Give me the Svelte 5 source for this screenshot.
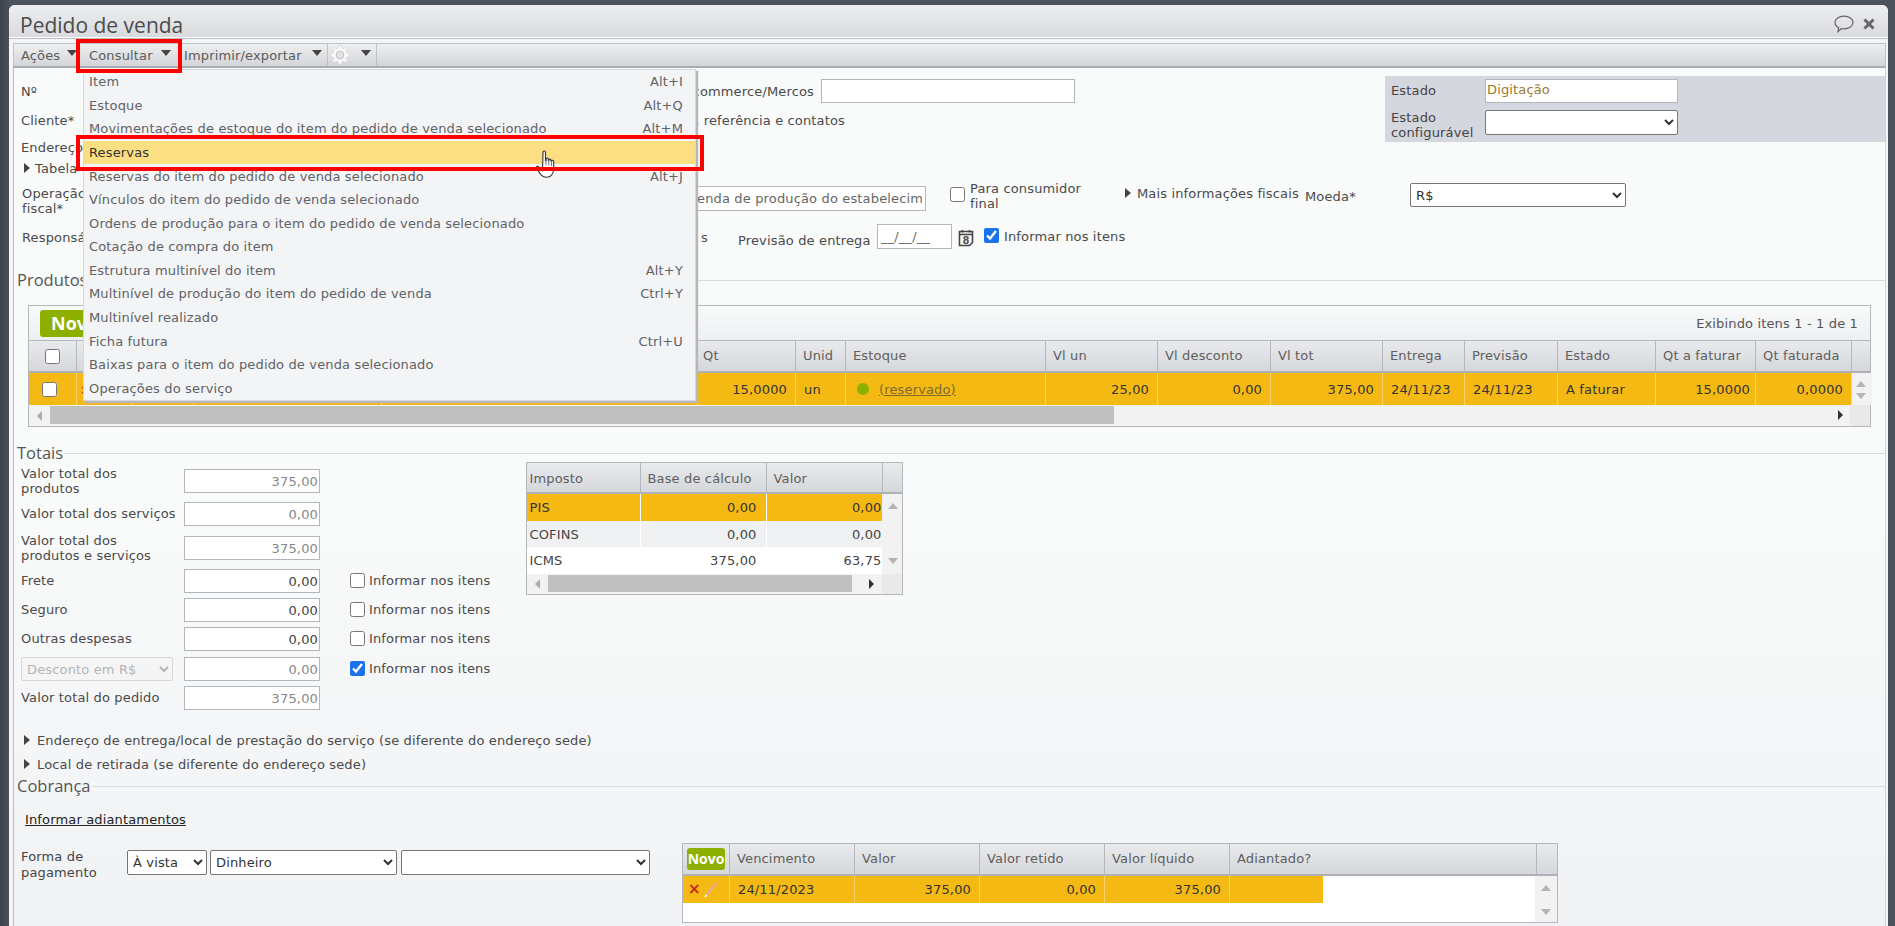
<script>
  const menu = [
    ['Item', 'Alt+I'], ['Estoque', 'Alt+Q'],
    ['Movimentações de estoque do item do pedido de venda selecionado', 'Alt+M'],
    ['Reservas', ''], ['Reservas do item do pedido de venda selecionado', 'Alt+J'],
    ['Vínculos do item do pedido de venda selecionado', ''],
    ['Ordens de produção para o item do pedido de venda selecionado', ''],
    ['Cotação de compra do item', ''], ['Estrutura multinível do item', 'Alt+Y'],
    ['Multinível de produção do item do pedido de venda', 'Ctrl+Y'],
    ['Multinível realizado', ''], ['Ficha futura', 'Ctrl+U'],
    ['Baixas para o item do pedido de venda selecionado', ''], ['Operações do serviço', '']
  ];
  const cols = [48, 55, 62, 188, 316, 98, 50, 200, 112, 113, 112, 82, 93, 98, 100, 96, 20];
  const mainTemplate = cols.map((c) => c + 'px').join(' ');
  const head = ['', '', '', '', '', 'Qt', 'Unid', 'Estoque', 'Vl un', 'Vl desconto', 'Vl tot', 'Entrega', 'Previsão', 'Estado', 'Qt a faturar', 'Qt faturada', ''];
  const row = [
    ['', ''], ['', ''], ['', ''], ['', ''], ['', ''], ['15,0000', 'r'], ['un', ''], ['', 'stock'],
    ['25,00', 'r'], ['0,00', 'r'], ['375,00', 'r'], ['24/11/23', ''], ['24/11/23', ''], ['A faturar', ''], ['15,0000', 'r'], ['0,0000', 'r']
  ];
  const taxes = [
    ['PIS', '0,00', '0,00', 'hlrow'], ['COFINS', '0,00', '0,00', 'alt'], ['ICMS', '375,00', '63,75', 'plain']
  ];
  const billHead = ['Vencimento', 'Valor', 'Valor retido', 'Valor líquido', 'Adiantado?'];
  const gearPoints = Array.from({ length: 32 }, (_, i) => {
    const a = ((i * 11.25 - 5.6) * Math.PI) / 180;
    const r = i % 4 < 2 ? 9.6 : 7.2;
    return `${(10 + r * Math.cos(a)).toFixed(2)},${(10 + r * Math.sin(a)).toFixed(2)}`;
  }).join(' ');
</script>

<div class="page">
  <div class="window">
    <header class="titlebar">
      <h1>Pedido de venda</h1>
      <div class="title-icons">
        <svg width="20" height="18" viewBox="0 0 20 18" fill="none" stroke="#666" stroke-width="1.2"><path d="M10 1.2c5 0 9 2.7 9 6.3s-4 6.3-9 6.3c-.9 0-1.7-.1-2.5-.3L4 16.6l.6-4C2.400 11.500 1 9.700 1 7.500 1 3.900 5 1.200 10 1.200z"/></svg>
        <svg width="12" height="12" viewBox="0 0 12 12" stroke="#666" stroke-width="3"><path d="M1.500 1.500l9 9M10.500 1.500l-9 9"/></svg>
      </div>
    </header>
    <div class="body">
      <nav class="toolbar">
        <span class="tb tb-a">Ações<i class="caret"></i></span>
        <span class="tb tb-c">Consultar<i class="caret"></i></span>
        <span class="tb tb-i">Imprimir/exportar<i class="caret"></i></span>
        <span class="tb tb-g">
          <svg width="20" height="20" viewBox="0 0 20 20"><polygon points={gearPoints} fill="#f8f8f8" stroke="#d4d5d7" stroke-width=".8"/><circle cx="10" cy="10" r="3.800" fill="#e2e3e5" stroke="#bdbfc2" stroke-width="1"/></svg>
          <i class="caret"></i>
        </span>
      </nav>

      <main class="content">
        <section class="top">
          <div class="top-left">
            <div class="line l1">
              <label class="f-no" for="n">Nº</label>
              <span class="ec">E-commerce/Mercos</span>
              <input id="n" class="inp ec-inp" readonly value="" />
            </div>
            <div class="line l2"><span class="f-no">Cliente*</span><span class="ref">Endereço, referência e contatos</span></div>
            <div class="line l3"><span>Endereço</span></div>
            <div class="line l4"><i class="tri"></i><span>Tabela</span></div>
          </div>
          <div class="state">
            <div class="st-row st1"><span class="st-label">Estado</span><input class="inp st-inp dig" readonly value="Digitação" /></div>
            <div class="st-row st2"><span class="st-label">Estado<br />configurável</span><select class="sel st-inp"><option></option></select></div>
          </div>
        </section>

        <div class="l5">
          <span class="op">Operação<br />fiscal*</span>
          <input class="inp op-inp" readonly value="Venda de produção do estabelecimento" />
          <input type="checkbox" class="ck ck-final" />
          <span class="final">Para consumidor<br />final</span>
          <i class="tri tri-more"></i>
          <span class="more">Mais informações fiscais</span>
          <span class="moeda">Moeda*</span>
          <select class="sel moeda-sel"><option>R$</option></select>
        </div>

        <div class="l6">
          <span class="resp">Responsável</span>
          <span class="s-end">s</span>
          <span class="prev">Previsão de entrega</span>
          <input class="inp date" readonly value="__/__/__" />
          <svg class="cal" width="17" height="18" viewBox="0 0 17 18" fill="none" stroke="#444" stroke-width="1.600"><path d="M1.500 2.500h13v11l-3 3h-10z"/><path d="M1.500 5.500h13M4.500 1v2.500M11.500 1v2.500"/><text x="8" y="14.800" font-size="10" font-weight="700" fill="#555" stroke="none" text-anchor="middle" font-family="DejaVu Sans">8</text></svg>
          <input type="checkbox" class="ck ck-itens" checked />
          <span class="itens-l">Informar nos itens</span>
        </div>

        <div class="legend lg-prod"><span>Produtos</span><b></b></div>

        <section class="grid-panel">
          <div class="grid-tools">
            <button class="novo">Novo</button>
            <span class="count">Exibindo itens 1 - 1 de 1</span>
          </div>
          <div class="grid-row grid-head" style="grid-template-columns:{mainTemplate}">
            {#each head as h, i}
              <div class="th">{#if i === 0}<input type="checkbox" class="ck" />{:else}{h}{/if}</div>
            {/each}
          </div>
          <div class="grid-row" style="grid-template-columns:{mainTemplate}">
            {#each row as c, i}
              <div class="td" class:r={c[1] === 'r'}>
                {#if i === 0}<input type="checkbox" class="ck" />
                {:else if i === 1}<span class="redx">×</span>
                {:else if c[1] === 'stock'}<i class="dot"></i><a href="#r" class="res">(reservado)</a>
                {:else}{c[0]}{/if}
              </div>
            {/each}
            <div class="vs"><i class="up"></i><i class="down"></i></div>
          </div>
          <div class="hs">
            <i class="left"></i>
            <div class="thumb main-thumb"></div>
            <i class="right main-right"></i>
            <div class="corner"></div>
          </div>
        </section>

        <div class="legend lg-tot"><span>Totais</span><b></b></div>

        <section class="totals">
          <div class="tot-grid">
            <span class="tl tl2">Valor total dos<br />produtos</span><input class="inp num ro" readonly value="375,00" /><span></span><span></span>
            <span class="tl">Valor total dos serviços</span><input class="inp num ro" readonly value="0,00" /><span></span><span></span>
            <span class="tl tl2">Valor total dos<br />produtos e serviços</span><input class="inp num ro" readonly value="375,00" /><span></span><span></span>
            <span class="tl">Frete</span><input class="inp num" readonly value="0,00" /><span class="cks"><input type="checkbox" class="ck" /></span><span class="tl">Informar nos itens</span>
            <span class="tl">Seguro</span><input class="inp num" readonly value="0,00" /><span class="cks"><input type="checkbox" class="ck" /></span><span class="tl">Informar nos itens</span>
            <span class="tl">Outras despesas</span><input class="inp num" readonly value="0,00" /><span class="cks"><input type="checkbox" class="ck" /></span><span class="tl">Informar nos itens</span>
            <select class="sel disc" disabled><option>Desconto em R$</option></select><input class="inp num ro" readonly value="0,00" /><span class="cks"><input type="checkbox" class="ck" checked /></span><span class="tl">Informar nos itens</span>
            <span class="tl">Valor total do pedido</span><input class="inp num ro" readonly value="375,00" /><span></span><span></span>
          </div>
          <div class="tax">
            <div class="tax-head"><div>Imposto</div><div>Base de cálculo</div><div>Valor</div><div></div></div>
            <div class="tax-mid">
              <div class="tax-rows">
                {#each taxes as t}
                  <div class="tax-row {t[3]}"><div>{t[0]}</div><div class="r">{t[1]}</div><div class="r">{t[2]}</div></div>
                {/each}
              </div>
              <div class="vs tax-vs"><i class="up"></i><i class="down"></i></div>
            </div>
            <div class="hs tax-hs">
              <i class="left"></i>
              <div class="thumb tax-thumb"></div>
              <i class="right"></i>
              <div class="corner"></div>
            </div>
          </div>
        </section>

        <div class="link-row lr1"><i class="tri"></i><span>Endereço de entrega/local de prestação do serviço (se diferente do endereço sede)</span></div>
        <div class="link-row lr2"><i class="tri"></i><span>Local de retirada (se diferente do endereço sede)</span></div>

        <div class="legend lg-cob"><span>Cobrança</span><b></b></div>
        <a href="#a" class="adv">Informar adiantamentos</a>

        <section class="billing">
          <div class="pay">
            <span class="pay-label">Forma de<br />pagamento</span>
            <select class="sel s1"><option>À vista</option></select>
            <select class="sel s2"><option>Dinheiro</option></select>
            <select class="sel s3"><option></option></select>
          </div>
          <div class="bill">
            <div class="bill-head">
              <div class="b0"><button class="novo small">Novo</button></div>
              {#each billHead as b}<div>{b}</div>{/each}
              <div></div>
            </div>
            <div class="bill-body">
              <div class="bill-main">
                <div class="bill-row">
                  <div class="b0 icons"><span class="redx big">×</span>
                    <svg width="14" height="16" viewBox="0 0 14 16" fill="none"><path d="M12.500 1L2.500 13" stroke="#f0b8a0" stroke-width="2.600"/><path d="M12.500 1L2.500 13" stroke="#d9683a" stroke-width=".8" stroke-dasharray="1.500 1"/><path d="M2.500 13L1 15" stroke="#fff" stroke-width="1.800"/></svg>
                  </div>
                  <div>24/11/2023</div><div class="r">375,00</div><div class="r">0,00</div><div class="r">375,00</div><div class="blank"></div>
                </div>
              </div>
              <div class="vs bill-vs"><i class="up"></i><i class="down"></i></div>
            </div>
          </div>
        </section>
      </main>
    </div>
  </div>

  <div class="menu">
    {#each menu as m, i}
      <div class="mi" class:hl={i === 3}><span>{m[0]}</span><span>{m[1]}</span></div>
    {/each}
  </div>
  <svg class="hand" width="22" height="30" viewBox="0 0 22 30"><path d="M7 2.200c0-1.600 2.500-1.600 2.500 0v8.300l.6-.1V9c0-1.300 2.200-1.300 2.200 0v1.600l.5.100V10c0-1.300 2.200-1.300 2.200 0v1l.5.100c0-1.200 2.200-1.100 2.200.3v6.800c0 3-.5 5-2 6.800-1.700 2.700-7.500 2.900-9.800.6-1.800-1.700-3.500-4.500-5-6.900-.8-1.300-.7-2 0-2.300 1-.4 2 .3 3 1.800l2.600 2.400z" fill="#fff" stroke="#333" stroke-width="1.100"/><path d="M10 10.500v5M12.800 10.500v5M15.500 11v5" stroke="#666" stroke-width=".9"/></svg>
  <div class="redbox rb-c"></div>
  <div class="redbox rb-r"></div>
</div>

<style>
  :global(body) { margin: 0; background: #454a52; }
  :global(*) { box-sizing: border-box; }
  .page { width: 1895px; height: 926px; overflow: hidden; position: relative; padding: 5px 7px 0 9px;
    background: linear-gradient(90deg, #3c424c 0, #4c525b 9px);
    font: 13px/15px "DejaVu Sans", Verdana, sans-serif; letter-spacing: .15px; color: #4a4a4a; }
  .window { height: 921px; background: #f4f5f6; border-radius: 6px 6px 0 0; display: flex; flex-direction: column; overflow: hidden; }
  .titlebar { height: 34px; flex: none; display: flex; align-items: center; justify-content: space-between; padding: 0 13px 0 11px;
    background: linear-gradient(#eceef0, #d8dadd); border-bottom: 1px solid #b9bcc1; box-shadow: inset 0 -1px 0 #fff; }
  h1 { margin: 7px 0 0; font-weight: 400; font-size: 21px; line-height: 27px; color: #4c4c4c; letter-spacing: 0; font-family: "Open Sans", "DejaVu Sans", sans-serif; }
  .title-icons { display: flex; align-items: center; gap: 9px; margin-top: 4px; }
  .body { flex: 1; padding: 4px 2px 0 4px; min-height: 0; display: flex; flex-direction: column; }
  .toolbar { height: 25px; flex: none; display: flex; background: linear-gradient(#eeeff0, #d3d5d9); border: 1px solid #bfc2c6; border-width: 1px 1px 2px; border-bottom-color: #a9acb1; color: #5c5c5c; }
  .tb { display: flex; align-items: center; height: 22px; position: relative; }
  .tb-a { width: 63px; padding-left: 7px; }
  .tb-c { width: 106px; padding-left: 12px; }
  .tb-i { width: 145px; padding-left: 1px; border-right: 1px solid #bfc2c6; }
  .tb-g { width: 49px; padding-left: 2px; border-right: 1px solid #bfc2c6; }
  .caret { position: absolute; top: 6px; width: 0; height: 0; border: 5px solid transparent; border-top: 6px solid #444; border-bottom: 0; }
  .tb-a .caret { left: 53px; }
  .tb-c .caret { left: 84px; }
  .tb-i .caret { left: 129px; }
  .tb-g .caret { left: 33px; }

  .content { flex: 1; min-height: 0; background: linear-gradient(#f9fafa 0, #f9fafa 50%, #f1f2f4 100%); border-left: 1px solid #b9bcc1; border-right: 1px solid #d0d2d5; }
  .top { height: 115px; display: grid; grid-template-columns: 1371px 1fr; }
  .top-left { padding-left: 7px; }
  .state { margin-top: 8px; height: 66px; background: #d4d7de; padding: 3px 0 0 6px; color: #444; }
  .st-row { display: flex; }
  .st1 { height: 31px; }
  .st-label { width: 94px; white-space: nowrap; }
  .st1 .st-label { line-height: 24px; }
  .inp { height: 24px; border: 1px solid #b3b6bb; background: #fff; padding: 0 3px; font: inherit; letter-spacing: inherit; color: #666; outline: none; }
  .sel { height: 25px; border: 1px solid #767676; border-radius: 2px; background: #fff; font: inherit; letter-spacing: inherit; color: #333; padding: 0 0 0 1px; margin: 0; }
  .st-inp { width: 193px; }
  .dig { color: #9a7a2e; padding: 0 1px 3px; }
  .line { display: flex; align-items: center; }
  .l1 { height: 24px; margin-top: 11px; }
  .f-no { width: 0; white-space: nowrap; }
  .ec { width: 800px; padding-right: 7px; text-align: right; white-space: nowrap; }
  .ec-inp { width: 254px; }
  .l2 { height: 24px; margin-top: 5px; }
  .ref { width: 824px; text-align: right; white-space: nowrap; }
  .l3 { height: 24px; margin-top: 3px; }
  .l4 { height: 18px; gap: 5px; padding-left: 3px; }
  .tri { display: inline-block; width: 0; height: 0; border: 5px solid transparent; border-left: 6px solid #444; border-right: 0; flex: none; }

  .l5, .l6 { display: flex; align-items: flex-start; padding-left: 8px; }
  .l5 { height: 30px; margin-top: 1px; }
  .op { width: 0; white-space: nowrap; margin-top: 2px; }
  .op-inp { margin: 2px 0 0 663px; width: 241px; height: 25px; }
  .ck { width: 15px; height: 15px; margin: 0; accent-color: #1a73e8; flex: none; }
  .ck-final { margin: 3px 0 0 24px; }
  .final { margin: -3px 0 0 5px; width: 144px; white-space: nowrap; }
  .tri-more { margin: 4px 0 0 11px; }
  .more { margin: 2px 0 0 6px; width: 168px; white-space: nowrap; }
  .moeda { width: 105px; margin-top: 5px; }
  .moeda-sel { width: 216px; margin-top: -1px; height: 24px; }
  .l6 { height: 25px; margin-top: 10px; }
  .resp { width: 0; white-space: nowrap; margin-top: 6px; }
  .s-end { margin: 6px 0 0 679px; width: 37px; }
  .prev { width: 139px; margin-top: 9px; white-space: nowrap; }
  .date { width: 75px; height: 25px; }
  .cal { margin: 5px 0 0 6px; }
  .ck-itens { margin: 4px 0 0 9px; }
  .itens-l { margin: 5px 0 0 5px; white-space: nowrap; }

  .legend { display: flex; align-items: center; font-size: 16.5px; line-height: 18px; color: #555; padding-left: 3px; letter-spacing: 0; font-family: "Open Sans", sans-serif; }
  .legend b { flex: 1; height: 1px; background: #dadcde; margin-left: 1px; }
  .lg-prod { margin-top: 22px; height: 18px; }
  .grid-panel { margin: 16px 14px 0 14px; border: 1px solid #b4b7bc; background: #f2f3f4; height: 122px; }
  .grid-tools { height: 34px; display: flex; align-items: center; justify-content: space-between; padding-right: 12px; background: linear-gradient(#f9fafa, #eeeff1); }
  .novo { border: 0; background: #8db000; color: #fff; font: 700 18px/27px "Open Sans", sans-serif; letter-spacing: 0; height: 27px; width: 80px; border-radius: 3px; margin-left: 11px; padding: 0 0 0 11px; text-align: left; }
  .count { color: #555; }
  .grid-row { display: grid; }
  .grid-head { height: 33px; background: linear-gradient(#e9eaec, #d5d7db); border-top: 1px solid #b4b7bc; border-bottom: 2px solid #aeb1b6; }
  .th { border-right: 1px solid #b4b7bc; padding: 0 7px; line-height: 30px; color: #5e5e5e; white-space: nowrap; display: flex; align-items: center; }
  .th:first-child { justify-content: center; padding: 0; }
  .th:nth-child(6) { padding-left: 5px; }
  .th:last-child { border: 0; }
  .td { height: 32px; background: #f5b914; border-right: 1px solid #f9d56b; display: flex; align-items: center; padding: 0 8px; color: #333; white-space: nowrap; }
  .td:first-child { justify-content: center; padding: 0 6px 0 0; }
  .td:nth-child(2) { padding: 0 0 0 3px; }
  .td:nth-child(15) { padding-right: 5px; }
  .td.r { justify-content: flex-end; }
  .redx { color: #c62a1d; font-weight: 700; font-size: 13px; }
  .dot { width: 12px; height: 12px; border-radius: 50%; background: #8db000; margin: 0 10px 0 3px; flex: none; }
  .res { color: #7d6a30; text-decoration: underline; }
  .vs { background: #f2f2f2; position: relative; }
  .up, .down { position: absolute; left: 4px; width: 0; height: 0; border: 5px solid transparent; border-top: 0; border-bottom: 6px solid #b4b4b4; }
  .up { top: 8px; }
  .down { bottom: 6px; border-bottom: 0; border-top: 6px solid #b4b4b4; }
  .hs { height: 21px; display: flex; align-items: center; position: relative; background: #f2f2f2; }
  .left, .right { width: 0; height: 0; border: 5px solid transparent; flex: none; }
  .left { margin: 0 10px 0 8px; border-left: 0; border-right: 5px solid #aaa; }
  .right { border-right: 0; border-left: 5px solid #333; }
  .main-right { position: absolute; left: 1809px; top: 5px; }
  .thumb { height: 18px; background: #c0c0c0; }
  .main-thumb { position: absolute; left: 21px; width: 1064px; top: 1px; }
  .corner { position: absolute; right: 0; top: 0; width: 20px; height: 21px; background: #e9e9ea; }

  .lg-tot { margin-top: 17px; height: 18px; }
  .totals { display: grid; grid-template-columns: 504.500px 377px; height: 252px; padding-left: 7px; }
  .tot-grid { display: grid; padding-top: 7px; grid-template-columns: 163px 136px 49px 156px; grid-template-rows: 33px 34px 33px 29px 29px 30px 29px 24px; color: #4a4a4a; }
  .tl { line-height: 24px; white-space: nowrap; }
  .tl2 { line-height: 15px; margin-top: -3px; }
  .tot-grid .inp { width: 136px; height: 24px; }
  .num { text-align: right; padding-right: 1px; color: #444; }
  .ro { color: #888; }
  .cks { padding: 4px 0 0 30px; }
  .disc { width: 152px; height: 24px; border-color: #ccc; background: #f5f5f5; color: #999; }
  .tax { border: 1px solid #b4b7bc; height: 133px; background: #f2f3f4; }
  .tax-head { height: 31px; display: grid; grid-template-columns: 114px 126px 116px 20px; background: linear-gradient(#e9eaec, #d5d7db); border-bottom: 2px solid #aeb1b6; }
  .tax-head div { border-right: 1px solid #b4b7bc; padding: 0 3px; line-height: 32px; color: #5e5e5e; white-space: nowrap; }
  .tax-head div:nth-child(2) { padding: 0 7px; }
  .tax-head div:nth-child(3) { padding: 0 7px; }
  .tax-head div:last-child { border: 0; }
  .tax-mid { display: flex; height: 80px; }
  .tax-rows { width: 355px; }
  .tax-row { height: 26.700px; display: grid; grid-template-columns: 114px 126px 115px; line-height: 28px; color: #444; }
  .tax-row div { padding: 0 3px; border-right: 1px solid #fff; white-space: nowrap; }
  .tax-row div:last-child { border: 0; padding-right: 0; }
  .tax-row div:nth-child(2) { padding-right: 9px; }
  .r { text-align: right; }
  .hlrow { background: #f5b914; color: #333; }
  .alt { background: #f0f1f2; }
  .plain { background: #fff; }
  .tax-vs { width: 21px; }
  .tax-vs .up { top: 9px; left: 6px; }
  .tax-vs .down { bottom: 10px; left: 6px; }
  .tax-hs { height: 20px; }
  .tax-hs .left { margin: 0 0 0 8px; }
  .tax-thumb { position: absolute; left: 21px; width: 304px; top: 1px; height: 17px; }
  .tax-hs .right { position: absolute; left: 342px; top: 5px; }
  .tax-hs .corner { height: 20px; }

  .link-row { display: flex; align-items: center; gap: 7px; height: 20px; padding-left: 10px; }
  .lr1 { margin-top: 16px; }
  .lr2 { margin-top: 4px; }
  .lg-cob { margin-top: 3px; height: 18px; }
  .adv { display: block; margin: 17px 0 0 11px; height: 15px; color: #222; text-decoration: underline; }
  .billing { display: flex; margin-top: 16px; }
  .pay { width: 668px; padding: 7px 0 0 7px; display: flex; align-items: flex-start; }
  .pay-label { width: 106px; line-height: 16px; margin-top: -1px; color: #444; }
  .s1 { width: 80px; }
  .s2 { width: 187px; margin-left: 3px; }
  .s3 { width: 249px; margin-left: 4px; }
  .bill { width: 876px; height: 80px; border: 1px solid #b4b7bc; background: #fff; }
  .bill-head { height: 32px; display: grid; grid-template-columns: 47px 125px 125px 125px 125px 307px 20px; background: linear-gradient(#e9eaec, #d5d7db); border-bottom: 2px solid #aeb1b6; }
  .bill-head div { border-right: 1px solid #b4b7bc; padding: 0 7px; line-height: 30px; color: #5e5e5e; white-space: nowrap; }
  .bill-head div:last-child { border: 0; }
  .bill-head .b0 { padding: 0; }
  .small { width: 38px; height: 22px; font-size: 14px; line-height: 22px; padding: 0; margin: 4px 0 0 4px; text-align: center; }
  .bill-body { display: flex; height: 46px; }
  .bill-main { flex: 1; }
  .bill-row { display: grid; grid-template-columns: 47px 125px 125px 125px 125px 93px; height: 27px; line-height: 27px; color: #333; }
  .bill-row > div { background: #f5b914; border-right: 1px solid #f9d56b; padding: 0 8px; white-space: nowrap; }
  .bill-row > .blank { border: 0; }
  .bill-row > .icons { padding: 0 0 0 5px; display: flex; align-items: center; gap: 3px; }
  .big { font-size: 15px; }
  .bill-vs { width: 22px; }
  .bill-vs .up { top: 9px; left: 6px; }
  .bill-vs .down { bottom: 7px; left: 6px; }

  .menu { position: absolute; left: 83px; top: 69px; width: 613px; height: 332px; display: grid; grid-auto-rows: 1fr; background: #f3f4f5; border: 1px solid #d5d7da; box-shadow: 2px 2px 1px #b5b7ba; color: #5f6267; }
  .mi { display: flex; justify-content: space-between; align-items: center; padding: 0 12px 0 5px; white-space: nowrap; }
  .hl { background: #fbdf82; color: #333; }
  .redbox { position: absolute; border: 4px solid #f00; }
  .rb-c { left: 76px; top: 39px; width: 106px; height: 34px; }
  .rb-r { left: 76px; top: 135px; width: 628px; height: 36px; }
  .hand { position: absolute; left: 536px; top: 150px; }
</style>
